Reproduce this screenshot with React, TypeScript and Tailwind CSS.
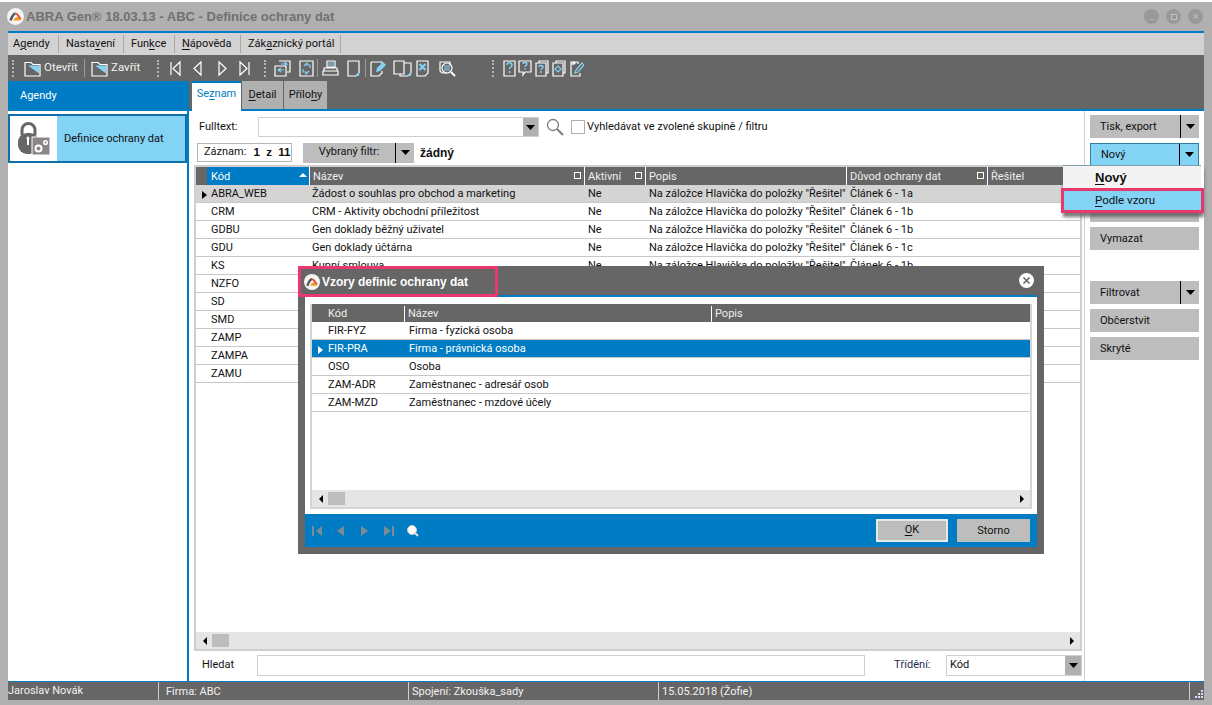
const sans = "font-['Roboto',sans-serif]";
const boldFont = "font-['Liberation_Sans',sans-serif]";

function Ul({ a, u, b }: { a?: string; u: string; b?: string }) {
  return (
    <>
      {a}
      <span className="underline underline-offset-2">{u}</span>
      {b}
    </>
  );
}

function Caret({ className = "text-black" }: { className?: string }) {
  return (
    <svg width="9" height="5" viewBox="0 0 9 5" className={className}>
      <path d="M0 0h9L4.500 5z" fill="currentColor" />
    </svg>
  );
}

function Ico({ w = 17, children }: { w?: number; children: React.ReactNode }) {
  return (
    <svg width={w} height="17" viewBox={`0 0 ${w} 17`} fill="none" stroke="#fff" strokeWidth="1.2" className="shrink-0">
      {children}
    </svg>
  );
}

const blue = "#83d3f5";

function Folder() {
  return (
    <Ico>
      <path d="M1 2.500h6l2 2h7v11.500H1z" />
      <path d="M4 5.500h11v8z" fill={blue} stroke="none" />
    </Ico>
  );
}

function Dots() {
  return <div className="h-[17px] w-0 border-l-2 border-dotted border-[#b5b5b5]" />;
}

function Sep() {
  return <div className="h-[18px] w-px bg-[#9a9a9a]" />;
}

function Logo({ size = 17 }: { size?: number }) {
  return (
    <svg width={size} height={size} viewBox="0 0 17 17" fill="none" className="shrink-0">
      <circle cx="8.500" cy="8.500" r="8.500" fill="#f4f4f4" />
      <path d="M3.500 12.500C5 8.500 6.500 5.500 8.500 5.500" stroke="#5a5a5a" strokeWidth="2.600" />
      <path d="M8.500 5.500c2 0 3.500 3 5 6" stroke="#e2502a" strokeWidth="2.200" />
      <path d="M6.500 12.500c1-2.200 2.500-3.500 3.500-3.500 1.200 0 2.500 1.500 3.500 3.500z" fill="#f39a1f" />
    </svg>
  );
}

function Toolbar() {
  return (
    <div className="flex h-[26px] items-center bg-[#666] pl-[4px] text-[11.500px] tracking-normal text-[#f2f2f2]">
      <Dots />
      <div className="ml-[10px] flex w-[60px] items-center gap-[3px]"><Folder /><span>Otevřít</span></div>
      <Sep />
      <div className="ml-[6px] flex w-[58px] items-center gap-[3px]"><Folder /><span>Zavřít</span></div>
      <div className="ml-[8px]"><Dots /></div>
      <div className="ml-[11px] flex items-center">
        <Ico w={11}><path d="M1 2v13M10 2v13L3 8.500z" /></Ico>
        <div className="ml-[11px]"><Ico w={11}><path d="M9 2v13L2 8.500z" /></Ico></div>
        <div className="ml-[14px]"><Ico w={11}><path d="M2 2v13l7-6.500z" /></Ico></div>
        <div className="ml-[11px]"><Ico w={11}><path d="M10 2v13M1 2v13l7-6.500z" /></Ico></div>
      </div>
      <div className="ml-[14px]"><Dots /></div>
      <div className="ml-[8px]">
        <Ico><path d="M5 1h11v11h-3M1 6h11v10H1z" /><path d="M7 4h6M10 2l3 2-3 2M10 10H4M7 8l-3 2 3 2" stroke={blue} /></Ico>
      </div>
      <div className="ml-[7px]">
        <Ico><path d="M2 1h13v15H2z" /><path d="M6 6l3-3v2h3v3M11 11l-3 3v-2H5V9" stroke={blue} /></Ico>
      </div>
      <div className="ml-[2px]"><Sep /></div>
      <div className="ml-[4px]">
        <Ico><path d="M5 1h8v6H5zM2 8h13v3H2zM1 11h15v4H1z" /><path d="M6 3h6M6 5h6" stroke={blue} /></Ico>
      </div>
      <div className="ml-[8px]">
        <Ico w={13}><path d="M1 1h11v12l-3 3H1z" /><path d="M12 12v4H8z" fill={blue} stroke="none" /></Ico>
      </div>
      <div className="ml-[5px]"><Sep /></div>
      <div className="ml-[4px]">
        <Ico><path d="M1 2h11v4M12 11v2l-3 3H1V2" /><path d="M6 12l1-4 6-6 3 3-6 6z" fill={blue} stroke="none" /></Ico>
      </div>
      <div className="ml-[6px]">
        <Ico w={19}><path d="M1 1h10v13H1zM11 3h7v10l-3 3H7v-2" /><path d="M18 12v4h-4z" fill={blue} stroke="none" /></Ico>
      </div>
      <div className="ml-[4px]">
        <Ico w={13}><path d="M1 1h11v12l-3 3H1z" /><path d="M3.500 4l6 6M9.500 4l-6 6" stroke={blue} strokeWidth="2.200" /></Ico>
      </div>
      <div className="ml-[10px]">
        <Ico><path d="M8 13H3l-2-2V2h10v3" /><circle cx="8" cy="8" r="5" /><path d="M5 6h6M5 8h6M5 10h6" stroke={blue} /><path d="M12 12l4 4" strokeWidth="2" /></Ico>
      </div>
      <div className="ml-[36px]"><Dots /></div>
      <div className="ml-[9px]">
        <Ico w={13}><path d="M1 1h11v15H1z" /><path d="M4 5c0-3 5-3 5 0 0 2-2.500 2-2.500 4M6.500 11v2" stroke={blue} strokeWidth="1.600" /></Ico>
      </div>
      <div className="ml-[2px]">
        <Ico w={14}><path d="M1 1h12v11H7l-2 3v-3H1z" /><path d="M5 4c0-2 4-2 4 0 0 1.500-2 1.500-2 3M7 8v1.500" stroke={blue} strokeWidth="1.400" /></Ico>
      </div>
      <div className="ml-[3px]">
        <Ico w={14}><path d="M4 3V1h9v12h-2M1 3h10v13H1z" /><path d="M4 7c0-2 4-2 4 0 0 1.500-2 1.500-2 3M6 11v2" stroke={blue} strokeWidth="1.400" /></Ico>
      </div>
      <div className="ml-[3px]">
        <Ico w={14}><path d="M4 3V1h9v12h-2M1 3h10v13H1z" /><path d="M6 6l3 3-3 3-3-3z" stroke={blue} /></Ico>
      </div>
      <div className="ml-[4px]">
        <Ico w={14}><path d="M1 4h3M8 4V2H1v14h9v-3" /><circle cx="4" cy="3" r="1" fill="#fff" /><path d="M5 13l1-3 6-7 2 2-6 7z" stroke={blue} /></Ico>
      </div>
    </div>
  );
}

const rows = [
  ["ABRA_WEB", "Žádost o souhlas pro obchod a marketing", "1a"],
  ["CRM", "CRM - Aktivity obchodní příležitost", "1b"],
  ["GDBU", "Gen doklady běžný uživatel", "1b"],
  ["GDU", "Gen doklady účtárna", "1c"],
  ["KS", "Kupní smlouva", "1b"],
  ["NZFO", "", ""],
  ["SD", "", ""],
  ["SMD", "", ""],
  ["ZAMP", "", ""],
  ["ZAMPA", "", ""],
  ["ZAMU", "", ""],
];

function HeadSquare() {
  return <span className="absolute right-[3px] top-[5px] h-[7px] w-[7px] border border-white" />;
}

function Scrollbar({ thumb }: { thumb: string }) {
  return (
    <div className="flex h-[17px] shrink-0 items-center bg-[#e5e5e5] pl-[7px] pr-[6px]">
      <span className="border-y-[4px] border-r-[4px] border-y-transparent border-r-black" />
      <span className={`ml-[5px] h-[13px] bg-[#bdbdbd] ${thumb}`} />
      <span className="ml-auto border-y-[4px] border-l-[4px] border-y-transparent border-l-black" />
    </div>
  );
}

function MainTable() {
  return (
    <div className="ml-[5px] mr-[2px] flex min-h-0 flex-1 flex-col border-2 border-[#cfcfcf] bg-white">
      <div className="flex h-[18px] shrink-0 text-[#eee]">
        <div className="w-[11px] bg-[#666]" />
        <div className="relative w-[103px] border-r border-white bg-[#007cc5] pl-[4px] pt-[2px] leading-[16px] text-white">
          Kód
          <span className="absolute right-[2px] top-[6px] border-x-[4px] border-b-[4px] border-x-transparent border-b-white" />
        </div>
        <div className="relative w-[275px] border-r border-white bg-[#666] pl-[3px] pt-[2px] leading-[16px]">Název<HeadSquare /></div>
        <div className="relative w-[61px] border-r border-white bg-[#666] pl-[3px] pt-[2px] leading-[16px]">Aktivní<HeadSquare /></div>
        <div className="w-[201px] border-r border-white bg-[#666] pl-[3px] pt-[2px] leading-[16px]">Popis</div>
        <div className="relative w-[141px] border-r border-white bg-[#666] pl-[3px] pt-[2px] leading-[16px]">Důvod ochrany dat<HeadSquare /></div>
        <div className="w-[75px] bg-[#666] pl-[3px] pt-[2px] leading-[16px]">Řešitel</div>
      </div>
      <div className="min-h-0 flex-1 text-[#111]">
        {rows.map((r, i) => (
          <div key={r[0]} className={`flex h-[18px] items-center whitespace-nowrap border-b border-[#c8c8c8] pt-[2px] ${i === 0 ? "bg-[#d4d4d4]" : ""}`}>
            <div className="flex w-[15px] shrink-0 justify-center pl-[2px]">
              {i === 0 && <span className="border-y-[4px] border-l-[5px] border-y-transparent border-l-black" />}
            </div>
            <div className="w-[101px] shrink-0">{r[0]}</div>
            <div className="w-[276px] shrink-0">{r[1]}</div>
            <div className="w-[61px] shrink-0">Ne</div>
            {i < 5 && <div className="w-[201px] shrink-0">Na záložce Hlavička do položky "Řešitel"</div>}
            {i < 5 && <div>Článek 6 - {r[2]}</div>}
          </div>
        ))}
      </div>
      <Scrollbar thumb="w-[17px]" />
    </div>
  );
}

function Btn({ label, split, active }: { label?: React.ReactNode; split?: boolean; active?: boolean }) {
  return (
    <div
      className={`flex h-[23px] shrink-0 items-center ${active ? "border border-[#2f7fa0] bg-[#83d3f5]" : "bg-[#bdbdbd]"} text-[#111]`}
    >
      <span className="flex-1 pl-[10px] pt-[2px]">{label}</span>
      {split && (
        <span className="flex h-full w-[19px] items-center justify-center border-l border-black">
          <Caret />
        </span>
      )}
    </div>
  );
}

function RightPane() {
  return (
    <div className="flex w-[120px] shrink-0 flex-col gap-[5px] border-l border-[#cfcfcf] px-[5px] pt-[4px]">
      <Btn label="Tisk, export" split />
      <Btn label="Nový" split active />
      {/* these two sit under the popup menu */}
      <Btn />
      <Btn />
      <Btn label="Vymazat" />
      <div className="h-[21px]" />
      <Btn label="Filtrovat" split />
      <Btn label="Občerstvit" />
      <Btn label="Skryté" />
    </div>
  );
}

function ListPanel() {
  return (
    <div className="flex min-w-0 flex-1 flex-col">
      <div className="flex h-[28px] items-center pl-[6px] pb-[1px] pt-[5px] text-[#111]">
        <span className="w-[63px] pl-[4px]">Fulltext:</span>
        <div className="flex h-[20px] w-[281px] border border-[#cfcfcf]">
          <div className="flex-1" />
          <div className="flex w-[15px] items-center justify-center bg-[#b0b0b0]"><Caret /></div>
        </div>
        <svg width="18" height="18" viewBox="0 0 18 18" fill="none" stroke="#7b7b7b" className="ml-[7px] shrink-0">
          <circle cx="7" cy="7" r="5.500" strokeWidth="1.300" />
          <path d="M11 11l6 6" strokeWidth="2" />
        </svg>
        <span className="ml-[7px] h-[14px] w-[14px] border border-[#b0b0b0]" />
        <span className="ml-[2px]">Vyhledávat ve zvolené skupině / filtru</span>
      </div>
      <div className="flex h-[24px] items-center pl-[8px] pt-[3px] text-[#111]">
        <div className="flex h-[19px] w-[95px] items-center border border-[#b5b5b5] pl-[6px]">
          Záznam:<b className={`ml-[7px] ${boldFont} text-[11.500px]`}>1&nbsp;&nbsp;z&nbsp;&nbsp;11</b>
        </div>
        <div className="ml-[11px] flex h-[20px] w-[111px] items-center bg-[#bdbdbd]">
          <span className="flex-1 text-center">Vybraný filtr:</span>
          <span className="flex h-full w-[19px] items-center justify-center border-l border-black"><Caret /></span>
        </div>
        <b className={`ml-[6px] ${boldFont} text-[12px]`}>žádný</b>
      </div>
      <div className="mt-[2px] flex min-h-0 flex-1 flex-col">
        <MainTable />
      </div>
      <div className="flex h-[30px] items-center pb-[2px] pl-[13px] text-[#111]">
        <span className="w-[55px]">Hledat</span>
        <div className="h-[21px] w-[608px] border border-[#cfcfcf]" />
        <span className="ml-[29px] w-[52px] text-[#1a2a4a]">Třídění:</span>
        <div className="flex h-[21px] w-[136px] items-center border border-[#cfcfcf] pl-[3px]">
          <span className="flex-1">Kód</span>
          <span className="flex h-full w-[16px] items-center justify-center bg-[#b0b0b0]"><Caret /></span>
        </div>
      </div>
    </div>
  );
}

function Body() {
  return (
    <div className="flex min-h-0 flex-1">
      <div className="w-[179px] shrink-0 bg-white">
        <div className="flex h-[30px] items-center bg-[#007cc5] pl-[12px] text-white">Agendy</div>
        <div className="mt-[3px] flex h-[49px] border-2 border-[#0f6fa8]">
          <div className="flex w-[47px] items-center justify-center bg-white">
            <svg width="34" height="34" viewBox="0 0 34 34">
              <path d="M5 13V8a6.500 6.500 0 0 1 13 0v5" fill="none" stroke="#666" strokeWidth="3" />
              <rect x="1" y="11" width="21" height="21" rx="9" fill="#666" />
              <path d="M9 17l2-3 2 3h-1v6h-2v-6z" fill="#fff" />
              <rect x="15" y="15" width="18" height="18" fill="#8b8587" stroke="#fff" />
              <circle cx="21.500" cy="26.500" r="3" fill="none" stroke="#fff" strokeWidth="2" />
              <circle cx="28.500" cy="20.500" r="1.800" fill="none" stroke="#fff" strokeWidth="1.500" />
            </svg>
          </div>
          <div className="flex flex-1 items-center bg-[#83d3f5] pl-[7px] pt-[2px] text-[#111]">Definice ochrany dat</div>
        </div>
      </div>
      <div className="flex min-w-0 flex-1 flex-col border-l-2 border-[#007cc5] bg-white">
        <div className="flex h-[30px] shrink-0 items-end border-b-2 border-[#007cc5] bg-[#666] pl-[3px]">
          <div className="flex h-[30px] w-[49px] translate-y-[2px] items-center justify-center border-t-2 border-[#007cc5] bg-white pb-[6px] text-[#007cc5]">
            <Ul a="Se" u="z" b="nam" />
          </div>
          <div className="ml-[1px] flex h-[28px] w-[41px] items-center justify-center bg-[#b0b0b0] text-[#111]">
            <Ul u="D" b="etail" />
          </div>
          <div className="ml-[1px] flex h-[28px] w-[43px] items-center justify-center bg-[#b0b0b0] text-[#111]">
            <Ul a="Přílo" u="h" b="y" />
          </div>
        </div>
        <div className="flex min-h-0 flex-1">
          <ListPanel />
          <RightPane />
        </div>
      </div>
    </div>
  );
}

function StatusBar() {
  return (
    <div className="flex h-[19px] shrink-0 items-center border-t border-[#007cc5] bg-[#666] text-[#f2f2f2]">
      <div className="w-[150px] pt-[1px]">Jaroslav Novák</div>
      <div className="h-full w-[250px] border-l border-[#cfcfcf] pl-[7px] leading-[19px]">Firma: ABC</div>
      <div className="h-full w-[250px] border-l border-[#cfcfcf] pl-[3px] leading-[19px]">Spojení: Zkouška_sady</div>
      <div className="h-full w-[531px] border-l border-[#cfcfcf] pl-[3px] leading-[19px]">15.05.2018 (Žofie)</div>
      <div className="flex h-full flex-1 items-end justify-end border-l border-[#cfcfcf] pb-[1px] pr-[1px]">
        <svg width="9" height="9" viewBox="0 0 9 9" fill="#cfe2ff">
          <path d="M7 0h2v2H7zM4 3h2v2H4zM7 3h2v2H7zM1 6h2v2H1zM4 6h2v2H4zM7 6h2v2H7z" />
        </svg>
      </div>
    </div>
  );
}

const modalRows = [
  ["FIR-FYZ", "Firma - fyzická osoba"],
  ["FIR-PRA", "Firma - právnická osoba"],
  ["OSO", "Osoba"],
  ["ZAM-ADR", "Zaměstnanec - adresář osob"],
  ["ZAM-MZD", "Zaměstnanec - mzdové účely"],
];

function Modal() {
  return (
    <div className="absolute left-[298px] top-[266px] flex h-[288px] w-[746px] flex-col border-x-[7px] border-b-[7px] border-[#666] bg-white">
      <div className="-mx-[7px] flex h-[29px] shrink-0 items-center justify-between bg-[#666] pr-[10px]">
        <div className="flex h-[31px] w-[200px] translate-y-[1px] items-center gap-[2px] border-[3px] border-[#e8396f] pl-[3px]">
          <Logo size={16} />
          <span className={`${boldFont} text-[12px] font-bold text-white`}>Vzory definic ochrany dat</span>
        </div>
        <svg width="15" height="15" viewBox="0 0 15 15">
          <circle cx="7.500" cy="7.500" r="7.500" fill="#fff" />
          <path d="M4.500 4.500l6 6M10.500 4.500l-6 6" stroke="#666" strokeWidth="1.600" />
        </svg>
      </div>
      <div className="h-[2px] shrink-0 bg-[#007cc5]" />
      <div className="mx-[5px] mt-[7px] flex min-h-0 flex-1 flex-col border-2 border-t-0 border-[#d5d5d5]">
        <div className="flex h-[18px] shrink-0 bg-[#666] pt-[2px] leading-[16px] text-[#eee]">
          <div className="w-[93px] border-r border-white pl-[16px]">Kód</div>
          <div className="w-[307px] border-r border-white pl-[3px]">Název</div>
          <div className="pl-[3px]">Popis</div>
        </div>
        <div className="min-h-0 flex-1">
          {modalRows.map((r, i) => (
            <div
              key={r[0]}
              className={`flex h-[18px] items-center border-b border-[#c8c8c8] pt-[2px] ${i === 1 ? "bg-[#007cc5] text-white" : "text-[#111]"}`}
            >
              <div className="flex w-[16px] shrink-0 justify-center">
                {i === 1 && <span className="border-y-[4px] border-l-[5px] border-y-transparent border-l-white" />}
              </div>
              <div className="w-[81px] shrink-0">{r[0]}</div>
              <div>{r[1]}</div>
            </div>
          ))}
        </div>
        <Scrollbar thumb="w-[17px]" />
      </div>
      <div className="mt-[5px] flex h-[33px] shrink-0 items-center bg-[#007cc5] px-[7px]">
        <svg width="108" height="14" viewBox="0 0 108 14" fill="#7d8b96" className="shrink-0">
          <path d="M0 2h2v10H0zM10 2v10L4 7zM32 2v10l-7-5zM49 2v10l7-5zM72 2v10l7-5zM80 2h2v10h-2z" />
          <circle cx="100" cy="6" r="4.500" fill="#fff" stroke="#ccc" />
          <path d="M103 9l3 3" stroke="#ddd" strokeWidth="2" />
        </svg>
        <div className="ml-auto flex h-[23px] w-[72px] items-center justify-center border-2 border-[#e8e8e8] bg-[#bdbdbd] text-[#111]">
          <Ul u="O" b="K" />
        </div>
        <div className="ml-[9px] flex h-[23px] w-[73px] items-center justify-center bg-[#bdbdbd] pt-[2px] text-[#111]">Storno</div>
      </div>
    </div>
  );
}

function PopupMenu() {
  return (
    <div className="absolute left-[1063px] top-[165px] w-[141px] text-[#111] shadow-[0_4px_3px_rgba(90,90,90,0.8)]">
      <div className={`mr-[3px] flex h-[23px] items-center border-t border-[#7f9fb0] bg-[#f3f3f3] pl-[32px] pt-[2px] ${boldFont} text-[13px] font-bold`}>
        <Ul u="N" b="ový" />
      </div>
      <div className="-ml-[2px] flex h-[25px] items-center border-[3px] border-[#e8396f] bg-[#83d3f5] pl-[31px] text-[11.500px]">
        <Ul u="P" b="odle vzoru" />
      </div>
    </div>
  );
}

export default function App() {
  return (
    <div className={`relative flex h-[705px] w-[1212px] flex-col overflow-hidden bg-[#b0b0b0] text-[11px] ${sans}`}>
      <div className="h-[2px] shrink-0 bg-white" />
      <div className="flex h-[29px] shrink-0 items-center pl-[7px] pr-[9px]">
        <Logo />
        <span className={`ml-[2px] ${boldFont} text-[13px] font-bold text-[#717171]`}>
          ABRA Gen® 18.03.13 - ABC - Definice ochrany dat
        </span>
        <div className="ml-auto flex gap-[7px]">
          <span className="flex h-[15px] w-[15px] items-center justify-center rounded-full bg-[#999] text-[9px] leading-none text-[#c0c0c0]">_</span>
          <span className="flex h-[15px] w-[15px] items-center justify-center rounded-full bg-[#999]">
            <span className="h-[6px] w-[6px] border border-[#c0c0c0]" />
          </span>
          <span className="flex h-[15px] w-[15px] items-center justify-center rounded-full bg-[#999] text-[11px] leading-none text-[#c0c0c0]">×</span>
        </div>
      </div>
      <div className="mx-[8px] flex min-h-0 flex-1 flex-col">
        <div className="flex h-[24px] shrink-0 items-center border-t-2 border-[#007cc5] bg-[#d2d2d2] text-[#111]">
          <div className="flex h-[18px] w-[51px] items-center border-r border-[#a8a8a8] pl-[5px]"><Ul a="A" u="g" b="endy" /></div>
          <div className="flex h-[18px] w-[65px] items-center border-r border-[#a8a8a8] pl-[7px]"><Ul a="Nasta" u="v" b="ení" /></div>
          <div className="flex h-[18px] w-[51px] items-center border-r border-[#a8a8a8] pl-[7px]"><Ul a="Fun" u="k" b="ce" /></div>
          <div className="flex h-[18px] w-[66px] items-center border-r border-[#a8a8a8] pl-[7px]"><Ul u="N" b="ápověda" /></div>
          <div className="flex h-[18px] w-[100px] items-center border-r border-[#a8a8a8] pl-[7px]"><Ul a="Zák" u="a" b="znický portál" /></div>
        </div>
        <Toolbar />
        <Body />
        <StatusBar />
      </div>
      <div className="h-[5px] shrink-0" />
      <Modal />
      <PopupMenu />
    </div>
  );
}
